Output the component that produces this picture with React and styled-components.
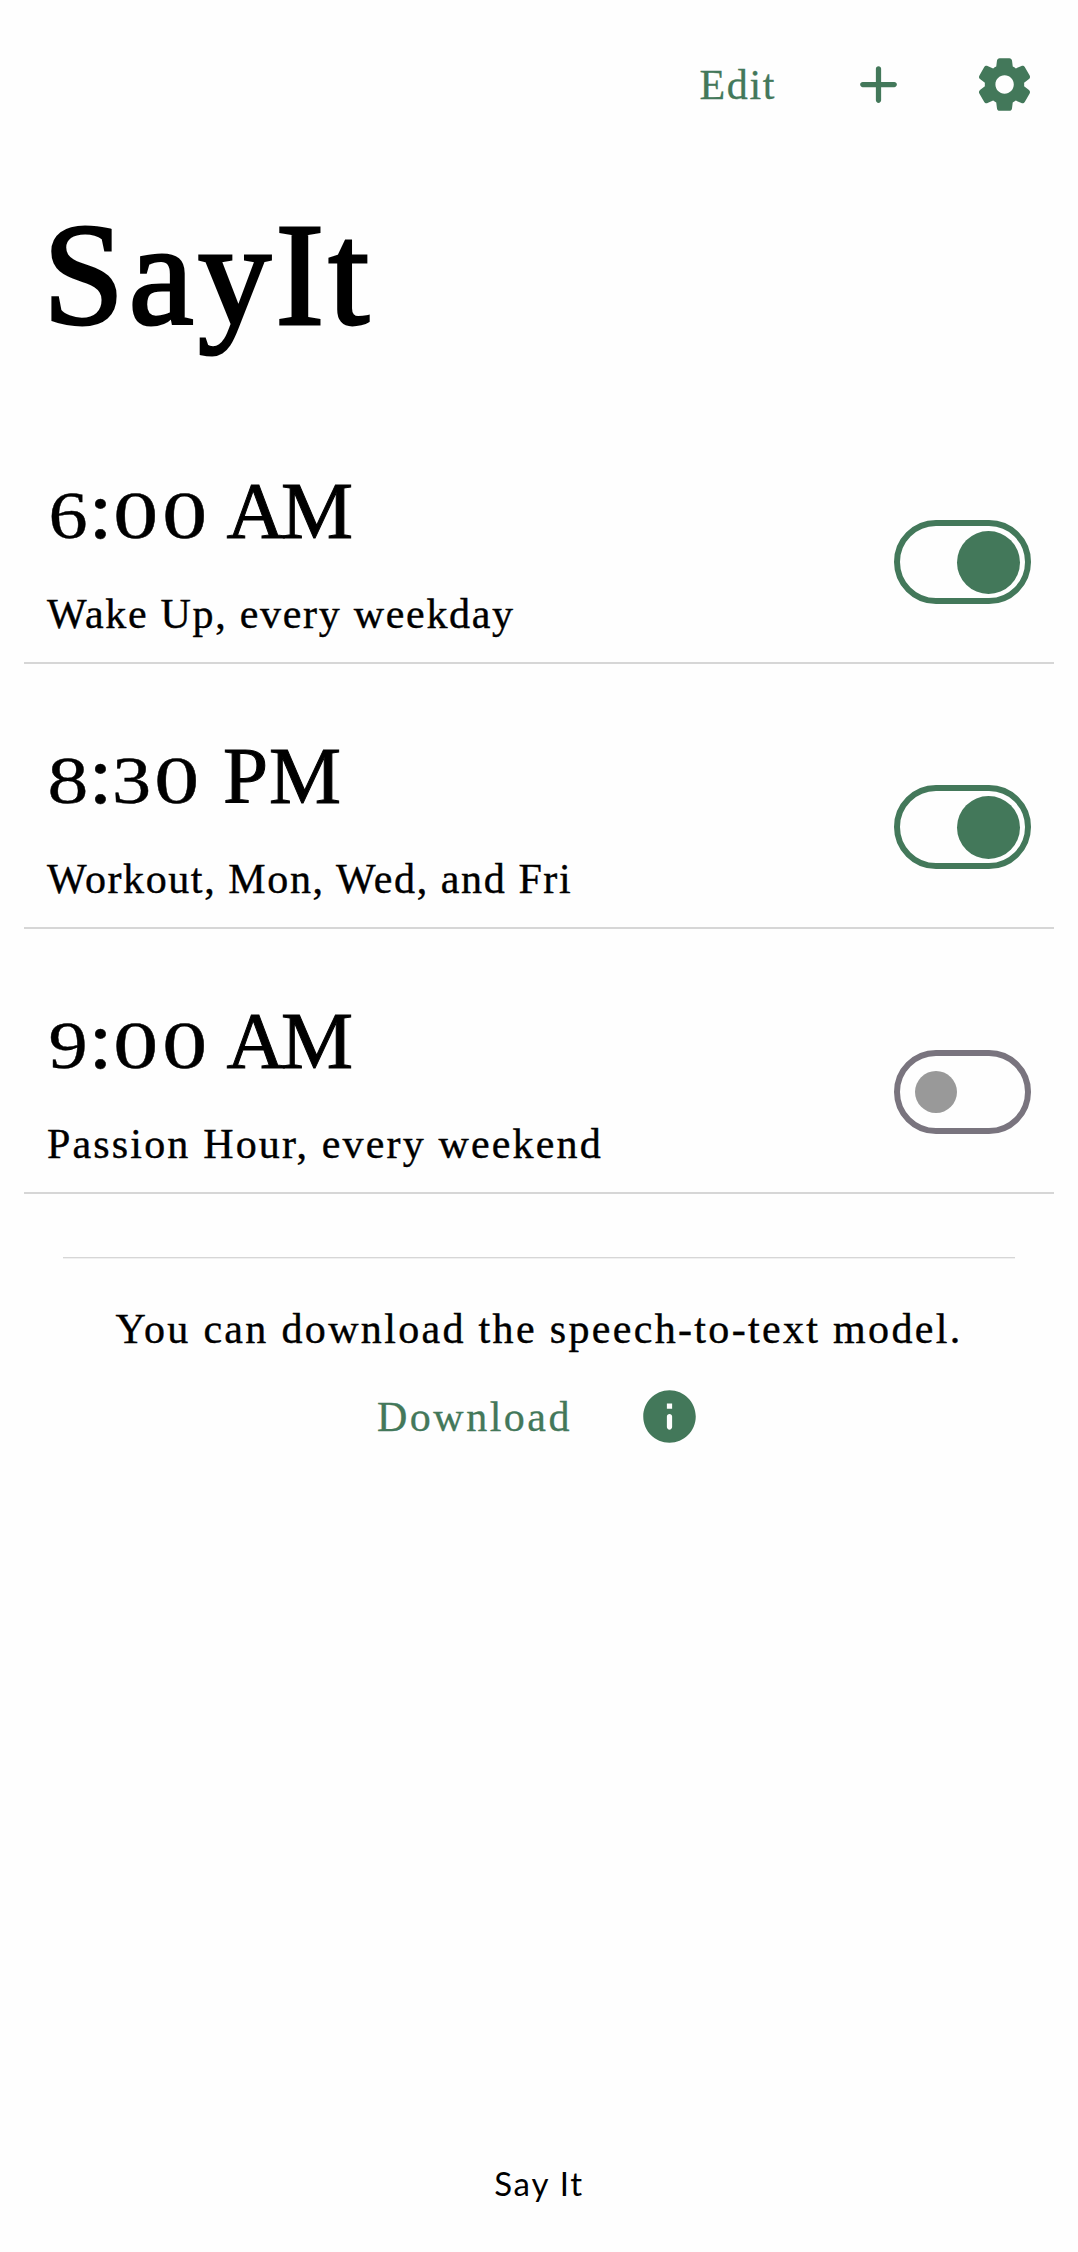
import React, { useState } from "react";
import styled, { createGlobalStyle } from "styled-components";

const green = "#43785a";
const serif = '"Liberation Serif", "Times New Roman", serif';

const GlobalStyle = createGlobalStyle`
  *, *::before, *::after { box-sizing: border-box; }
  body { margin: 0; background: #fefefe; }
  h1, p { margin: 0; font-weight: 400; }
  button { padding: 0; border: 0; background: none; cursor: pointer; }
`;

const Screen = styled.div`
  display: flex;
  flex-direction: column;
  width: 1078px;
  height: 2252px;
  background: #fefefe;
  color: #000;
  font-family: ${serif};
`;

const Toolbar = styled.header`
  display: flex;
  align-items: center;
  justify-content: flex-end;
  height: 169px;
  padding-right: 42px;
`;

const TextButton = styled.button`
  padding-top: 1px;
  color: ${green};
  font-family: ${serif};
  font-size: 42px;
  line-height: 48px;
  letter-spacing: ${(p) => p.$tracking}px;
  white-space: nowrap;
  -webkit-text-stroke: 0.3px ${green};
`;

const IconButton = styled.button`
  display: flex;
  width: 63px;
  height: 63px;
  margin-left: ${(p) => p.$gap}px;
  color: ${green};
`;

const Title = styled.h1`
  height: 230px;
  padding: 34px 0 0 43px;
  font-size: 146px;
  line-height: 145px;
  letter-spacing: 4.5px;
  -webkit-text-stroke: 3px #000;
`;

const AlarmList = styled.main`
  display: flex;
  flex-direction: column;
  padding: 0 24px;
`;

const AlarmRow = styled.section`
  display: flex;
  justify-content: space-between;
  height: 265px;
  padding: 71px 23px 0 23px;
  border-bottom: 2px solid #d6d6d6;
`;

const Time = styled.div`
  display: flex;
  align-items: baseline;
  height: 82px;
  font-size: 81px;
  line-height: 81px;
  white-space: pre;
  -webkit-text-stroke: 1px #000;
`;

const Numeral = styled.span`
  width: ${(p) => p.$width}px;
  font-size: ${(p) => p.$size}px;
  text-align: center;
  transform: scaleX(${(p) => p.$stretch});
  -webkit-text-stroke: 0.4px #000;
`;

const Period = styled.span`
  margin-left: ${(p) => (p.$wide ? 22 : 17)}px;
  letter-spacing: ${(p) => (p.$wide ? 1 : -4)}px;
`;

const Detail = styled.p`
  margin-top: 41px;
  font-size: 42px;
  line-height: 42px;
  letter-spacing: ${(p) => p.$tracking}px;
  white-space: nowrap;
  -webkit-text-stroke: 0.4px #000;
`;

const Track = styled.button`
  display: flex;
  align-items: center;
  justify-content: ${(p) => (p.$on ? "flex-end" : "flex-start")};
  width: 137px;
  height: 84px;
  margin-top: 50px;
  padding: ${(p) => (p.$on ? "0 5px" : "0 15px")};
  border: 6px solid ${(p) => (p.$on ? green : "#79747e")};
  border-radius: 42px;
`;

const Knob = styled.span`
  width: ${(p) => (p.$on ? 63 : 42)}px;
  height: ${(p) => (p.$on ? 63 : 42)}px;
  border-radius: 50%;
  background: ${(p) => (p.$on ? green : "#999999")};
`;

const ModelPanel = styled.section`
  display: flex;
  flex-direction: column;
  align-items: center;
  margin: 63px 63px 0;
  border-top: 1px solid #d6d6d6;
  box-shadow: inset 0 1px 0 #f0f0f0;
`;

const Notice = styled.p`
  margin-top: 50px;
  font-size: 42px;
  line-height: 42px;
  letter-spacing: 2.33px;
  white-space: nowrap;
  -webkit-text-stroke: 0.4px #000;
`;

const Actions = styled.div`
  display: flex;
  align-items: center;
  height: 63px;
  margin-top: 35px;
`;

const Footer = styled.footer`
  margin-top: auto;
  padding-bottom: 49px;
  font-family: Lato, "Open Sans", sans-serif;
  font-size: 33px;
  line-height: 40px;
  letter-spacing: 1.8px;
  text-align: center;
`;

const Glyph = ({ children }) => (
  <svg width="63" height="63" viewBox="0 0 24 24" fill="currentColor" aria-hidden="true">
    {children}
  </svg>
);

const PlusIcon = () => (
  <Glyph>
    <path d="M18 13h-5v5c0 .55-.45 1-1 1s-1-.45-1-1v-5H6c-.55 0-1-.45-1-1s.45-1 1-1h5V6c0-.55.45-1 1-1s1 .45 1 1v5h5c.55 0 1 .45 1 1s-.45 1-1 1z" />
  </Glyph>
);

const GearIcon = () => (
  <Glyph>
    <path d="M19.5 12c0-.23-.01-.45-.03-.68l1.86-1.41c.4-.3.51-.86.26-1.3l-1.87-3.23c-.25-.44-.79-.62-1.25-.42l-2.15.91c-.37-.26-.76-.49-1.17-.68l-.29-2.31c-.06-.5-.49-.88-.99-.88h-3.73c-.51 0-.94.38-1 .88l-.29 2.31c-.41.19-.8.42-1.17.68l-2.15-.91c-.46-.2-1-.02-1.25.42L2.41 8.62c-.25.44-.14.99.26 1.3l1.86 1.41c-.02.22-.03.44-.03.67s.01.45.03.68l-1.86 1.41c-.4.3-.51.86-.26 1.3l1.87 3.23c.25.44.79.62 1.25.42l2.15-.91c.37.26.76.49 1.17.68l.29 2.31c.06.5.49.88.99.88h3.73c.5 0 .93-.38.99-.88l.29-2.31c.41-.19.8-.42 1.17-.68l2.15.91c.46.2 1 .02 1.25-.42l1.87-3.23c.25-.44.14-.99-.26-1.3l-1.86-1.41c.03-.23.04-.45.04-.68zm-7.46 3.5c-1.93 0-3.5-1.57-3.5-3.5s1.57-3.5 3.5-3.5 3.5 1.57 3.5 3.5-1.57 3.5-3.5 3.5z" />
  </Glyph>
);

const InfoIcon = () => (
  <Glyph>
    <path d="M12 2C6.48 2 2 6.48 2 12s4.48 10 10 10 10-4.48 10-10S17.52 2 12 2zm0 15c-.55 0-1-.45-1-1v-4c0-.55.45-1 1-1s1 .45 1 1v4c0 .55-.45 1-1 1zm1-8h-2V7h2v2z" />
  </Glyph>
);

const numerals = {
  0: { $width: 49.5, $size: 68, $stretch: 1.32 },
  3: { $width: 41, $size: 68, $stretch: 1.15 },
  6: { $width: 42, $size: 68, $stretch: 1.15 },
  8: { $width: 42, $size: 68, $stretch: 1.2 },
  9: { $width: 42, $size: 68, $stretch: 1.15 },
  ":": { $width: 21.5, $size: 82, $stretch: 1.1 },
};

const initialAlarms = [
  { time: "6:00", period: "AM", detail: "Wake Up, every weekday", tracking: 1.7, on: true },
  { time: "8:30", period: "PM", detail: "Workout, Mon, Wed, and Fri", tracking: 1.6, on: true },
  { time: "9:00", period: "AM", detail: "Passion Hour, every weekend", tracking: 2.16, on: false },
];

function Alarm({ alarm, onToggle }) {
  return (
    <AlarmRow>
      <div>
        <Time>
          {alarm.time.split("").map((c, i) => (
            <Numeral key={i} {...numerals[c]}>{c}</Numeral>
          ))}
          <Period $wide={alarm.period === "PM"}>{alarm.period}</Period>
        </Time>
        <Detail $tracking={alarm.tracking}>{alarm.detail}</Detail>
      </div>
      <Track $on={alarm.on} role="switch" aria-checked={alarm.on} onClick={onToggle}>
        <Knob $on={alarm.on} />
      </Track>
    </AlarmRow>
  );
}

export default function App() {
  const [alarms, setAlarms] = useState(initialAlarms);
  const toggle = (index) =>
    setAlarms((list) => list.map((a, i) => (i === index ? { ...a, on: !a.on } : a)));

  return (
    <Screen>
      <GlobalStyle />
      <Toolbar>
        <TextButton $tracking={1.6}>Edit</TextButton>
        <IconButton $gap={71}><PlusIcon /></IconButton>
        <IconButton $gap={63}><GearIcon /></IconButton>
      </Toolbar>
      <Title>SayIt</Title>
      <AlarmList>
        {alarms.map((a, i) => (
          <Alarm key={a.time} alarm={a} onToggle={() => toggle(i)} />
        ))}
      </AlarmList>
      <ModelPanel>
        <Notice>You can download the speech-to-text model.</Notice>
        <Actions>
          <TextButton $tracking={2.5}>Download</TextButton>
          <IconButton $gap={66}><InfoIcon /></IconButton>
        </Actions>
      </ModelPanel>
      <Footer>Say It</Footer>
    </Screen>
  );
}
